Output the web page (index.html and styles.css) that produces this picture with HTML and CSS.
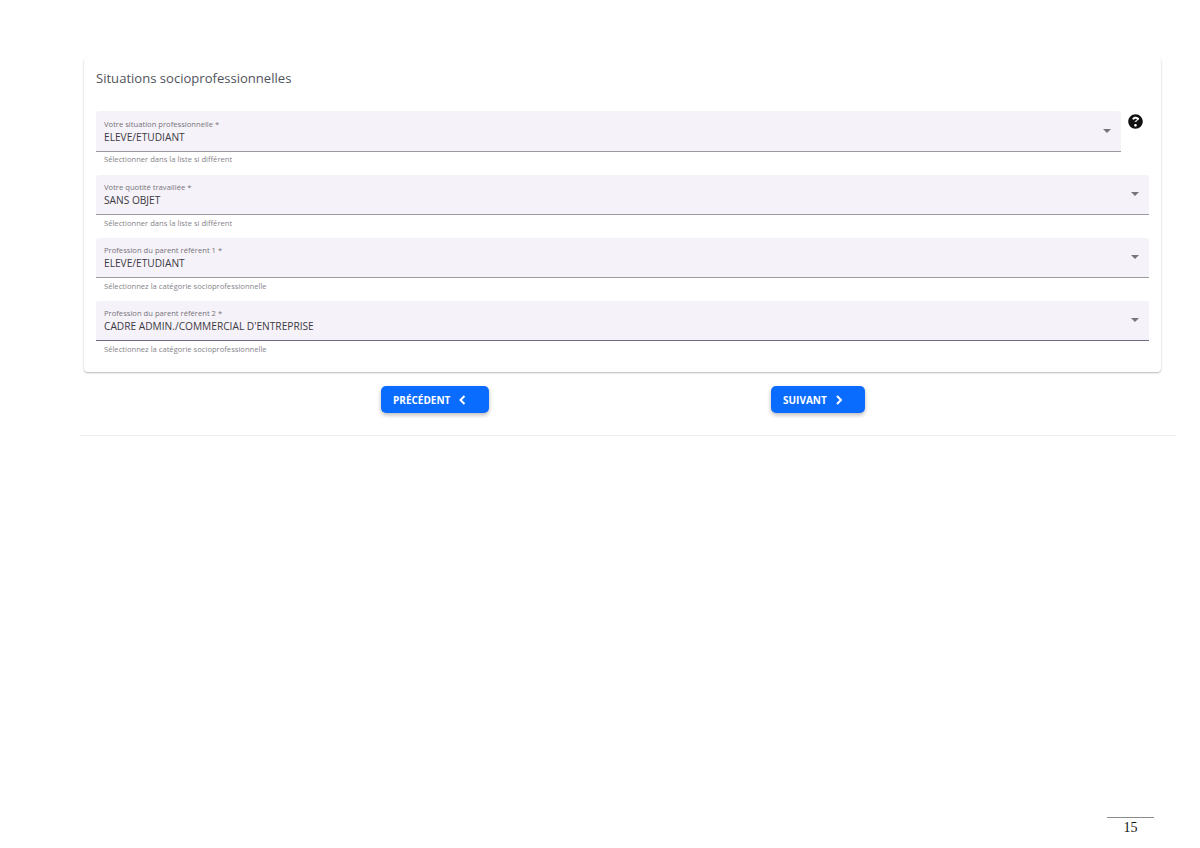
FILE: index.html
```html
<!DOCTYPE html>
<html lang="fr">
<head>
<meta charset="utf-8">
<title>Situations socioprofessionnelles</title>
<link rel="stylesheet" href="styles.css">
</head>
<body>
<main class="page">
  <section class="card">
    <h2 class="card-title">Situations socioprofessionnelles</h2>
    <div class="rows">
      <div class="row">
        <div class="field-wrap">
          <div class="field">
            <div class="field-text"><span class="label">Votre situation professionnelle *</span><span class="value">ELEVE/ETUDIANT</span></div>
            <span class="caret"></span>
          </div>
          <p class="hint">Sélectionner dans la liste si différent</p>
        </div>
        <svg class="help" viewBox="0 0 512 512" width="15" height="15"><path fill="#111" d="M504 256c0 137-111 248-248 248S8 393 8 256 119 8 256 8s248 111 248 248zM262.700 90c-54.500 0-89.300 23-116.500 63.800-3.500 5.300-2.400 12.400 2.700 16.300l34.700 26.300c5.200 3.900 12.600 3 16.700-2.100 17.900-22.700 30.100-35.800 57.300-35.800 20.400 0 45.700 13.100 45.700 33 0 15-12.400 22.700-32.600 34-23.600 13.200-54.800 29.700-54.800 70.900V240v0 16c0 6.600 5.400 12 12 12h56c6.600 0 12-5.400 12-12v-1.300c0-28.600 83.500-29.800 83.500-107.100C379.400 129.400 320 90 262.700 90zM256 339c-25.500 0-46.200 20.700-46.200 46.200 0 25.500 20.700 46.200 46.200 46.200s46.200-20.700 46.200-46.200c0-25.500-20.700-46.200-46.200-46.200z"/></svg>
      </div>
      <div class="row">
        <div class="field-wrap">
          <div class="field">
            <div class="field-text"><span class="label">Votre quotité travaillée *</span><span class="value">SANS OBJET</span></div>
            <span class="caret"></span>
          </div>
          <p class="hint">Sélectionner dans la liste si différent</p>
        </div>
      </div>
      <div class="row">
        <div class="field-wrap">
          <div class="field">
            <div class="field-text"><span class="label">Profession du parent référent 1 *</span><span class="value">ELEVE/ETUDIANT</span></div>
            <span class="caret"></span>
          </div>
          <p class="hint">Sélectionnez la catégorie socioprofessionnelle</p>
        </div>
      </div>
      <div class="row">
        <div class="field-wrap">
          <div class="field field-dark">
            <div class="field-text"><span class="label">Profession du parent référent 2 *</span><span class="value">CADRE ADMIN./COMMERCIAL D'ENTREPRISE</span></div>
            <span class="caret"></span>
          </div>
          <p class="hint">Sélectionnez la catégorie socioprofessionnelle</p>
        </div>
      </div>
    </div>
  </section>
  <nav class="actions">
    <button class="btn btn-prev" type="button">PRÉCÉDENT
      <svg viewBox="0 0 10 12" width="10" height="12"><path d="M7.500 2 3.500 6l4 4" fill="none" stroke="#fff" stroke-width="2"/></svg>
    </button>
    <button class="btn btn-next" type="button">SUIVANT
      <svg viewBox="0 0 10 12" width="10" height="12"><path d="M3 2l4 4-4 4" fill="none" stroke="#fff" stroke-width="2"/></svg>
    </button>
  </nav>
  <hr class="divider">
  <footer class="page-number"><span>15</span></footer>
</main>
</body>
</html>
```
FILE: styles.css
```css
* { box-sizing: border-box; }
html, body { margin: 0; padding: 0; background: #fff; }
.page {
  height: 848px;
  padding-top: 58px;
  display: flex;
  flex-direction: column;
  font-family: "Open Sans", "Liberation Sans", sans-serif;
  overflow: hidden;
}
.card {
  margin-left: 84px;
  width: 1077px;
  height: 314px;
  padding: 0 12px;
  background: #fff;
  border-radius: 4px;
  box-shadow: 0 1px 2px rgba(0,0,0,.28), 0 0 2px rgba(0,0,0,.04);
  clip-path: inset(0 -6px -6px -6px);
}
.card-title {
  margin: 0;
  padding-top: 11px;
  height: 53px;
  font-size: 13.070px;
  line-height: 18px;
  font-weight: 400;
  color: #50545c;
}
.rows { display: flex; flex-direction: column; }
.row { display: flex; height: 63px; align-items: flex-start; }
.row:first-child { height: 64px; }
.field-wrap { flex: 1; min-width: 0; }
.row:first-child .field-wrap { flex: 0 0 1025px; }
.row:first-child .field { height: 41px; }
.row:first-child .hint { padding-top: 2px; }
.help { margin: 3px 0 0 7px; }
.field {
  height: 40px;
  display: flex;
  align-items: center;
  justify-content: space-between;
  padding: 0 10px 0 8px;
  background: #f5f2f9;
  border-radius: 3px 3px 0 0;
  border-bottom: 1px solid #9a9a9e;
}
.field-dark { border-bottom-color: #6f6a7c; }
.field-text { display: flex; flex-direction: column; padding-top: 1px; }
.label { font-size: 7.630px; line-height: 11px; color: #75727a; }
.value { font-size: 10.180px; line-height: 15px; color: #3c3a44; }
.caret {
  width: 0;
  height: 0;
  margin-bottom: 1px;
  border-left: 4px solid transparent;
  border-right: 4px solid transparent;
  border-top: 4px solid #77757b;
}
.hint {
  margin: 0;
  padding: 3px 0 0 8px;
  font-size: 7.620px;
  line-height: 11px;
  color: #85838a;
}
.actions {
  height: 27px;
  margin-top: 14px;
  display: flex;
}
.btn {
  height: 27px;
  padding: 0 13px 0 12px;
  display: flex;
  align-items: center;
  gap: 7px;
  border: 0;
  border-radius: 5px;
  background: #0a6cff;
  color: #fff;
  font-family: "Open Sans", "Liberation Sans", sans-serif;
  font-size: 10px;
  font-weight: 700;
  box-shadow: 0 2px 4px rgba(0,0,0,.28);
}
.btn-prev { width: 108px; margin-left: 381px; }
.btn-next { width: 94px; margin-left: 282px; }
.divider {
  width: 1096px;
  height: 1px;
  margin: 22px 0 0 80px;
  border: 0;
  background: #eeeeee;
}
.page-number {
  margin-top: auto;
  margin-left: 1107px;
  width: 47px;
  height: 31px;
  border-top: 1px solid #8a8a8a;
  text-align: center;
  font-family: "Liberation Serif", serif;
  font-size: 14px;
  line-height: 19px;
  color: #111;
}
```
